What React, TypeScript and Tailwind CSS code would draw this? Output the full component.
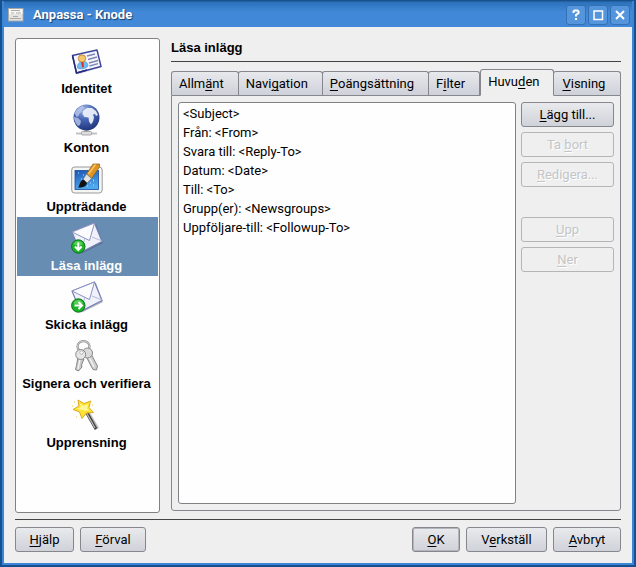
import React, { useState } from 'react';

type Page = { label: string; icon: React.ReactNode };

function Mnemonic({ text }: { text: string }) {
  const at = text.indexOf('&');
  if (at < 0) return <>{text}</>;
  return (
    <span>
      {text.slice(0, at)}
      <span className="underline decoration-1 underline-offset-2">{text[at + 1]}</span>
      {text.slice(at + 2)}
    </span>
  );
}

function CardIcon() {
  return (
    <svg viewBox="0 0 32 32" className="size-8" aria-hidden="true">
      <path d="M3 11.500 27 5.500 31 22 7 29.500Z" fill="#c9cbd8" opacity=".6" />
      <path d="M1.500 10.500 26 5 30 21.500 5.500 28Z" fill="#f4f6ff" stroke="#3d4596" strokeWidth="1.400" strokeLinejoin="round" />
      <path d="M1.500 10.500 5.500 28 16 25" fill="none" stroke="#272a7e" strokeWidth="1.500" />
      <path d="M16 11 24 9M17 14.500 26 12M18 18 27 15.500M18.500 21 27 18.700" stroke="#8086b4" strokeWidth="1.300" />
      <path d="M6.500 23c-.5-4 2-6 5-6.500s5.500 1 5.500 4.500c-2 2.500-7 4-10.500 2Z" fill="#70bdf2" stroke="#3e8ccd" strokeWidth=".6" />
      <circle cx="11" cy="13.500" r="3.700" fill="#f6c66d" stroke="#b8792a" strokeWidth=".8" />
      <path d="m10.500 17 2 .2.300 5-1.600.4-1-4.500Z" fill="#d72f28" />
    </svg>
  );
}

function GlobeIcon() {
  return (
    <svg viewBox="0 0 32 32" className="size-8" aria-hidden="true">
      <defs>
        <radialGradient id="globe" cx=".4" cy=".2" r=".85">
          <stop offset="0" stopColor="#a0b5e6" />
          <stop offset=".45" stopColor="#4765b4" />
          <stop offset="1" stopColor="#1c3176" />
        </radialGradient>
      </defs>
      <path d="M14.500 25h2v3h-2ZM5 29.500h21" stroke="#c2c2c2" fill="#aaa" strokeWidth="2" />
      <rect x="10.500" y="27.500" width="10" height="3.500" rx="1" fill="#ddd" stroke="#999" strokeWidth=".8" />
      <circle cx="15.500" cy="13.500" r="13" fill="url(#globe)" />
      <path d="M3.500 9c2-4 5-6 8-7l2 1.500-3 2.500 1 1.500-3 2-1 2.500-2 1Z" fill="#c5d1ee" opacity=".7" />
      <path d="M3 13l4 1 3 3-1 4-2 1c-2-2-4-5-4-9Z" fill="#b6c5e8" opacity=".8" />
      <path d="M12 7l4-3 5 0 4 3 2 4-2 1-1-2-2 .5 1 3-1 4-2 3-2-3-.5-4-4-.5-2-3Z" fill="#eef2fb" opacity=".92" />
    </svg>
  );
}

function BrushIcon() {
  return (
    <svg viewBox="0 0 32 32" className="size-8" aria-hidden="true">
      <defs>
        <linearGradient id="canvas" x2=".3" y2="1">
          <stop stopColor="#1c55b5" />
          <stop offset="1" stopColor="#4ea9ee" />
        </linearGradient>
      </defs>
      <rect x=".7" y="4" width="30.500" height="26" rx="3" fill="#f5f5f5" stroke="#9a9a9a" />
      <rect x="4" y="7.500" width="23.500" height="19" fill="url(#canvas)" stroke="#1b4b9c" strokeWidth=".8" />
      <path d="M7 10h1m4 2h1m-3 4h1m6-5h1m4 7h1m-4 2h1m2 2h1m-7 1h1m5-6h1" stroke="#b7e5ff" strokeWidth="1" />
      <path d="M22 1h6.500v3L20.500 15.500l-5-4.500Z" fill="#dc9525" stroke="#8c5d1b" strokeWidth=".7" />
      <path d="M24.500 1.500 17.500 11" stroke="#ffc45e" strokeWidth="1.500" />
      <path d="m15.500 11 5 4.500-4.500 4.500-4-3.500Z" fill="#e3e3e3" stroke="#777" strokeWidth=".7" />
      <path d="M12.500 16.500 16 20c-1 4-5 5-9 4.500 2-2 1-6 5.500-8Z" fill="#111" />
    </svg>
  );
}

function MailIcon({ incoming }: { incoming: boolean }) {
  return (
    <svg viewBox="0 0 32 32" className="size-8" aria-hidden="true">
      <path d="M3 11 25 2 32 21 11 31.500Z" fill="#3d4667" opacity=".4" />
      <path d="M1 10 23.500 1 31 19.500 9.500 30.500Z" fill="#f0f1fb" stroke="#777eb4" strokeWidth="1.200" strokeLinejoin="round" />
      <path d="m9.500 30 4.500-14m7-1 10 4" fill="none" stroke="#b7bbd9" />
      <path d="M1 10 18.500 18.500 23.500 1Z" fill="#fcfcff" stroke="#8d93c2" strokeLinejoin="round" />
      <circle cx="7.300" cy="24.500" r="6.700" fill="#1cb427" stroke="#08751a" />
      <path d="M2.500 22c2-4 7.500-4 9.500 0-3 2-6 2-9.500 0Z" fill="#8be183" opacity=".55" />
      <path d={incoming ? 'M7.300 20.500v7m-3.300-3 3.300 3.500 3.300-3.500' : 'M3.500 24.500h7m-3-3.500 3.500 3.500-3.500 3.500'} fill="none" stroke="#fff" strokeWidth="2" />
    </svg>
  );
}

function KeysIcon() {
  return (
    <svg viewBox="0 0 32 32" className="size-8" aria-hidden="true">
      <path d="m15 16 5-2 6.500 12-1 4-3.500-.5-2-3.500Z" fill="#cfcfcf" stroke="#868686" />
      <path d="m7 17 6 2-2.500 6 .5 2-3.500 4-3-1.500 1-4Z" fill="#c9c9c9" stroke="#868686" />
      <path d="m9 19-2 10m11-12 5 10" stroke="#f4f4f4" strokeWidth="1.300" />
      <ellipse cx="12.500" cy="6.500" rx="6" ry="5.300" fill="none" stroke="#898989" strokeWidth="2.200" />
      <ellipse cx="12.500" cy="6.500" rx="6" ry="5.300" fill="none" stroke="#dcdcdc" strokeWidth=".9" />
      <circle cx="16.500" cy="13" r="5" fill="#dadada" stroke="#888" />
      <circle cx="9.700" cy="14.500" r="5" fill="#e6e6e6" stroke="#888" />
      <circle cx="10.500" cy="12.500" r="1.700" fill="#fff" stroke="#999" strokeWidth=".7" />
    </svg>
  );
}

function WandIcon() {
  return (
    <svg viewBox="0 0 32 32" className="size-8" aria-hidden="true">
      <path d="m16 13 10 17" stroke="#bbb" strokeWidth="4.500" />
      <path d="m15.500 13 9.500 17" stroke="#3f3f3f" strokeWidth="3" />
      <path d="m15 13 9 16" stroke="#bcbcbc" strokeWidth="1.200" />
      <path d="m7 1 6 3.500L19.500 2 18 8.500l4.500 5-7 .5L11 19.500 8.500 13 2 10.500l6-3.500Z" fill="#ffe332" stroke="#e0a923" strokeLinejoin="round" />
      <path d="m8.500 4 4 3 5-2-1.500 4 2 3-4.500-.5L6 10l4-2Z" fill="#fff799" />
      <path d="M3 3h1m1 15h1M1 7h1m19-1h1" stroke="#ecd047" />
    </svg>
  );
}

const pages: Page[] = [
  { label: 'Identitet', icon: <CardIcon /> },
  { label: 'Konton', icon: <GlobeIcon /> },
  { label: 'Uppträdande', icon: <BrushIcon /> },
  { label: 'Läsa inlägg', icon: <MailIcon incoming /> },
  { label: 'Skicka inlägg', icon: <MailIcon incoming={false} /> },
  { label: 'Signera och verifiera', icon: <KeysIcon /> },
  { label: 'Upprensning', icon: <WandIcon /> },
];

const tabs = ['Allm&änt', 'Navi&gation', '&Poängsättning', 'F&ilter', 'Huvu&den', '&Visning'];

const headers = [
  '<Subject>',
  'Från: <From>',
  'Svara till: <Reply-To>',
  'Datum: <Date>',
  'Till: <To>',
  'Grupp(er): <Newsgroups>',
  'Uppföljare-till: <Followup-To>',
];

function PushButton({ text, disabled = false, strong = false, className = '' }: { text: string; disabled?: boolean; strong?: boolean; className?: string }) {
  const look = disabled
    ? 'border-[#b4b5b7] bg-[#efefef] text-[#c3c5c7] [text-shadow:1px_1px_0_#fff]'
    : 'border-[#85878c] bg-linear-to-b from-[#e9eaed] to-[#cfd2d9] text-black';
  const ring = strong ? 'shadow-[inset_0_0_0_1px_#b3b5ba]' : '';
  return (
    <button type="button" disabled={disabled} className={`flex h-[25px] items-center justify-center rounded-[3px] border ${look} ${ring} ${className}`}>
      <Mnemonic text={text} />
    </button>
  );
}

function TitleButton({ label, children }: { label: string; children: React.ReactNode }) {
  return (
    <button type="button" aria-label={label} className="flex size-5 items-center justify-center rounded-[3px] border border-[#3470b4] bg-[#5495dc] text-white">
      <svg viewBox="0 0 12 12" className="size-3" fill="none" stroke="currentColor" strokeWidth="2" aria-hidden="true">
        {children}
      </svg>
    </button>
  );
}

export default function App() {
  const [page, setPage] = useState(3);
  const [tab, setTab] = useState(4);

  return (
    <div className="flex min-h-screen flex-col border-2 border-t border-[#17508f] bg-[#3b86d6] px-0.5 pb-0.5 font-[Roboto,sans-serif] text-[13px] leading-[19px] text-black">
      <header className="flex h-[26px] items-center border-t border-[#24629f] bg-linear-to-b from-[#2c70b9] to-[#4189d8] to-40% pr-0.5 pl-1">
        <svg viewBox="0 0 16 16" className="size-4" aria-hidden="true">
          <rect x=".5" y="1.500" width="14.500" height="12.500" fill="#e5e4df" stroke="#a9a9a4" />
          <path d="M1 2h13.500v5H1Z" fill="#f8f8f5" />
          <path d="M3 3.500h9M8 6h5M3 6h3M5 9.500h5M2 11.500h11" stroke="#aaa" />
        </svg>
        <h1 className="ml-[9px] flex-1 text-[13px] font-bold text-white [text-shadow:1px_1px_1px_#153d70]">Anpassa - Knode</h1>
        <div className="flex gap-0.5">
          <TitleButton label="Hjälp om fönstret">
            <path d="M3.500 4V2.500L4.500 1.500h3l1 1V4L6 6v1.500M6 9v2" />
          </TitleButton>
          <TitleButton label="Maximera">
            <path d="M2 2h8.500v8.500H2Z" strokeWidth="1.500" />
          </TitleButton>
          <TitleButton label="Stäng">
            <path d="m2 2 8 8m0-8-8 8" />
          </TitleButton>
        </div>
      </header>

      <main className="flex flex-1 flex-col bg-[#efefef] p-[11px]">
        <div className="flex flex-1 gap-[11px]">
          <nav aria-label="Inställningar" className="flex w-[145px] shrink-0 flex-col rounded-[3px] border border-[#7f8285] bg-[#fefefe] p-px font-['Liberation_Sans',sans-serif]">
            {pages.map((p, i) => (
              <button
                key={p.label}
                type="button"
                onClick={() => setPage(i)}
                aria-current={i === page ? 'page' : undefined}
                className={`flex h-[59px] flex-col items-center border border-dotted pt-1 pr-0.5 font-bold whitespace-nowrap ${i === page ? 'border-[#a08068] bg-[#678db2] text-white' : 'border-transparent'}`}
              >
                {p.icon}
                <span className="mt-0.5">{p.label}</span>
              </button>
            ))}
          </nav>

          <section className="mb-0.5 flex min-w-0 flex-1 flex-col">
            <h2 className="h-6 border-b border-[#444] font-['Liberation_Sans',sans-serif] text-[13px] font-bold">{pages[page].label}</h2>
            <div role="tablist" className="mt-[7px] flex items-end">
              {tabs.map((t, i) => (
                <button
                  key={t}
                  type="button"
                  role="tab"
                  aria-selected={i === tab}
                  onClick={() => setTab(i)}
                  className={`flex items-center rounded-t-[3px] border whitespace-nowrap ${
                    i === tab
                      ? 'z-10 -mb-px h-[27px] border-[#85878c] border-b-[#efefef] bg-[#efefef] pr-3.5 pb-0.5 pl-[7px]'
                      : 'h-6 border-b-0 border-[#85878c] bg-linear-to-b from-[#e8e9ed] to-[#ced1d9] pr-3.5 pl-[7px] not-first:-ml-px last:flex-1 last:pl-2'
                  }`}
                >
                  <Mnemonic text={t} />
                </button>
              ))}
            </div>
            <div role="tabpanel" className="flex flex-1 gap-[5px] rounded-b-[3px] border border-[#85878c] p-1.5">
              <select
                size={7}
                aria-label="Huvuden"
                className="min-w-0 flex-1 appearance-none rounded-[3px] border border-[#7f8285] bg-[#fefefe] pt-[3px] outline-none [&>option]:h-[19px] [&>option]:p-0 [&>option]:px-1 [&>option]:leading-[19px]"
              >
                {headers.map((h) => (
                  <option key={h}>{h}</option>
                ))}
              </select>
              <div className="flex w-[93px] shrink-0 flex-col gap-[5px]">
                <PushButton text="&Lägg till..." />
                <PushButton text="Ta &bort" disabled />
                <PushButton text="&Redigera..." disabled />
                <PushButton text="&Upp" disabled className="mt-[25px]" />
                <PushButton text="&Ner" disabled />
              </div>
            </div>
          </section>
        </div>

        <footer className="mt-1.5 flex items-center gap-1.5 border-t border-[#444] pt-[7px]">
          <PushButton text="&Hjälp" className="w-[59px]" />
          <PushButton text="&Förval" className="mr-auto w-[66px]" />
          <PushButton text="&OK" strong className="w-12" />
          <PushButton text="V&erkställ" className="w-[81px]" />
          <PushButton text="&Avbryt" className="w-[68px]" />
        </footer>
      </main>
    </div>
  );
}
